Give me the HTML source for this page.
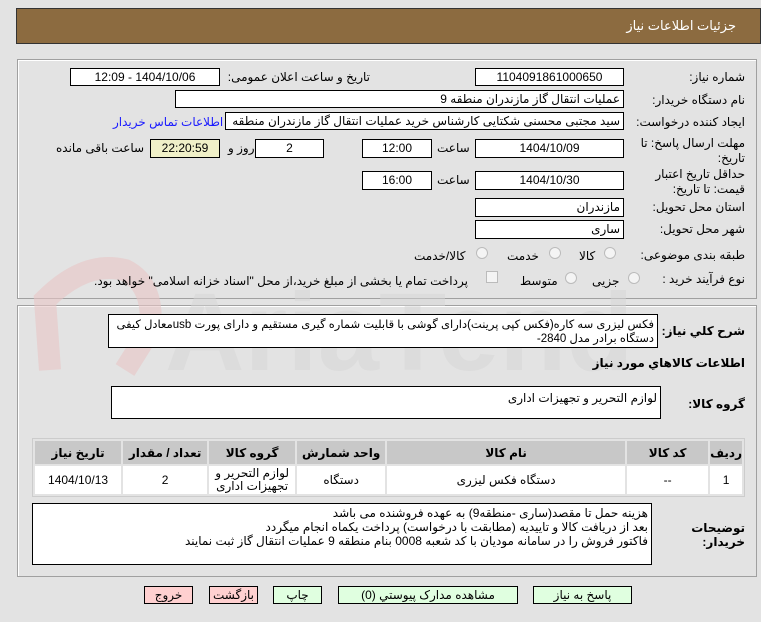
<!DOCTYPE html>
<html><head><meta charset="utf-8"><style>
*{margin:0;padding:0;box-sizing:border-box}
body{width:761px;height:622px;background:#e3e3e3;font-family:"Liberation Sans","DejaVu Sans",sans-serif;font-size:12px;color:#000;position:relative;overflow:hidden}
.a{position:absolute}
.hdr{left:16px;top:8px;width:745px;height:36px;background:#8c6b40;border:1px solid #333;color:#fff;font-size:13px;text-align:right;padding:9px 24px 0 0}
.pan{border:1px solid #a0a0a0;box-shadow:inset 1px 1px 0 #fff}
.box{background:#fff;border:1px solid #000;text-align:center;font-size:12px;line-height:16px;direction:rtl;white-space:nowrap;overflow:hidden}
.l{text-align:right;direction:rtl;white-space:nowrap;font-size:12px}
.rbox{text-align:right;padding-right:3px}
.radio{width:12px;height:12px;border-radius:50%;border:1px solid #bbb;background:#f4f4f4}
.b{font-weight:bold}
table{border-collapse:separate;border-spacing:2px;background:#e3e3e3;border:1px solid #ccc}
td{text-align:center;font-size:12px;direction:rtl}
th{background:#c8c8c8;font-weight:bold;font-size:12px;height:23px}
td{background:#fff;height:28px;line-height:13px}
.btn{height:18px;border:1px solid #000;font-size:12px;text-align:center;line-height:16px;direction:rtl}
</style></head><body>
<div class="a hdr">جزئیات اطلاعات نیاز</div>
<div class="a pan" style="left:17px;top:59px;width:740px;height:240px"></div>
<div class="a pan" style="left:17px;top:305px;width:740px;height:272px"></div>
<svg class="a" style="left:15px;top:240px" width="620" height="140">
<path d="M35 130 L30 60 Q70 20 110 30 Q140 45 135 90 L110 130" fill="none" stroke="#e8c4c4" stroke-width="22" opacity="0.6"/>
<text x="150" y="130" font-family="Liberation Sans" font-weight="bold" font-size="110" fill="#d6d6d6" opacity="0.5">AriaTender.net</text>
</svg>

<div class="a l" style="right:16px;top:70px">شماره نیاز:</div>
<div class="a box" style="left:475px;top:68px;width:149px;height:18px">1104091861000650</div>
<div class="a l" style="right:391px;top:70px">تاریخ و ساعت اعلان عمومی:</div>
<div class="a box" style="left:70px;top:68px;width:150px;height:18px">1404/10/06 - 12:09</div>

<div class="a l" style="right:16px;top:93px">نام دستگاه خریدار:</div>
<div class="a box rbox" style="left:175px;top:90px;width:449px;height:18px">عملیات انتقال گاز مازندران منطقه 9</div>

<div class="a l" style="right:16px;top:115px">ایجاد کننده درخواست:</div>
<div class="a box rbox" style="left:225px;top:112px;width:399px;height:18px">سید مجتبی محسنی شکتایی کارشناس خرید عملیات انتقال گاز مازندران منطقه</div>
<div class="a l" style="left:113px;top:115px;color:#1a1aff">اطلاعات تماس خریدار</div>

<div class="a l" style="right:16px;top:136px;line-height:15px">مهلت ارسال پاسخ: تا<br>تاریخ:</div>
<div class="a box" style="left:475px;top:139px;width:149px;height:19px">1404/10/09</div>
<div class="a l" style="left:437px;top:141px">ساعت</div>
<div class="a box" style="left:362px;top:139px;width:70px;height:19px">12:00</div>
<div class="a box" style="left:255px;top:139px;width:69px;height:19px">2</div>
<div class="a l" style="left:228px;top:141px">روز و</div>
<div class="a box" style="left:150px;top:139px;width:70px;height:19px;background:#f0f0c8">22:20:59</div>
<div class="a l" style="left:56px;top:141px">ساعت باقی مانده</div>

<div class="a l" style="right:16px;top:167px;line-height:15px">حداقل تاریخ اعتبار<br>قیمت: تا تاریخ:</div>
<div class="a box" style="left:475px;top:171px;width:149px;height:19px">1404/10/30</div>
<div class="a l" style="left:437px;top:173px">ساعت</div>
<div class="a box" style="left:362px;top:171px;width:70px;height:19px">16:00</div>

<div class="a l" style="right:16px;top:200px">استان محل تحویل:</div>
<div class="a box rbox" style="left:475px;top:198px;width:149px;height:19px">مازندران</div>
<div class="a l" style="right:16px;top:222px">شهر محل تحویل:</div>
<div class="a box rbox" style="left:475px;top:220px;width:149px;height:19px">ساری</div>

<div class="a l" style="right:16px;top:248px">طبقه بندی موضوعی:</div>
<div class="a radio" style="left:604px;top:247px"></div><div class="a l" style="left:579px;top:249px">کالا</div>
<div class="a radio" style="left:549px;top:247px"></div><div class="a l" style="left:507px;top:249px">خدمت</div>
<div class="a radio" style="left:476px;top:247px"></div><div class="a l" style="left:414px;top:249px">کالا/خدمت</div>

<div class="a l" style="right:16px;top:272px">نوع فرآیند خرید :</div>
<div class="a radio" style="left:628px;top:272px"></div><div class="a l" style="left:592px;top:274px">جزیی</div>
<div class="a radio" style="left:565px;top:272px"></div><div class="a l" style="left:520px;top:274px">متوسط</div>
<div class="a" style="left:486px;top:271px;width:12px;height:12px;border:1px solid #bbb;background:#f4f4f4"></div>
<div class="a l" style="left:94px;top:274px">پرداخت تمام یا بخشی از مبلغ خرید،از محل "اسناد خزانه اسلامی" خواهد بود.</div>

<div class="a l b" style="right:16px;top:324px">شرح کلي نیاز:</div>
<div class="a box rbox" style="left:108px;top:314px;width:550px;height:34px;white-space:normal;text-align:right;line-height:14px;padding-top:3px;font-size:11.5px">فکس لیزری سه کاره(فکس کپی پرینت)دارای گوشی با قابلیت شماره گیری مستقیم و دارای پورت usbمعادل کیفی دستگاه برادر مدل 2840-</div>
<div class="a l b" style="right:16px;top:356px">اطلاعات کالاهاي مورد نياز</div>

<div class="a l b" style="right:16px;top:397px">گروه کالا:</div>
<div class="a box rbox" style="left:111px;top:386px;width:550px;height:33px;padding-top:3px">لوازم التحریر و تجهیزات اداری</div>

<table class="a" style="left:32px;top:438px;width:713px" dir="rtl">
<tr><th style="width:27px">ردیف</th><th style="width:81px">کد کالا</th><th style="width:238px">نام کالا</th><th style="width:88px">واحد شمارش</th><th style="width:86px">گروه کالا</th><th style="width:84px">تعداد / مقدار</th><th>تاریخ نیاز</th></tr>
<tr><td>1</td><td>--</td><td>دستگاه فکس لیزری</td><td>دستگاه</td><td>لوازم التحریر و<br>تجهیزات اداری</td><td>2</td><td>1404/10/13</td></tr>
</table>

<div class="a l b" style="right:16px;top:521px;line-height:14px">توضیحات<br>خریدار:</div>
<div class="a box rbox" style="left:32px;top:503px;width:620px;height:62px;white-space:normal;text-align:right;line-height:14px;padding-top:2px">هزینه حمل تا مقصد(ساری -منطقه9) به عهده فروشنده می باشد<br>بعد از دریافت کالا و تاییدیه (مطابقت با درخواست) پرداخت یکماه انجام میگردد<br>فاکتور فروش را در سامانه مودیان با کد شعبه 0008 بنام منطقه 9 عملیات انتقال گاز ثبت نمایند</div>

<div class="a btn" style="left:144px;top:586px;width:49px;background:#ffd0d0">خروج</div>
<div class="a btn" style="left:209px;top:586px;width:49px;background:#ffd0d0">بازگشت</div>
<div class="a btn" style="left:273px;top:586px;width:49px;background:#e0ffe0">چاپ</div>
<div class="a btn" style="left:338px;top:586px;width:180px;background:#e0ffe0">مشاهده مدارک پیوستي (0)</div>
<div class="a btn" style="left:533px;top:586px;width:99px;background:#e0ffe0">پاسخ به نیاز</div>
</body></html>
